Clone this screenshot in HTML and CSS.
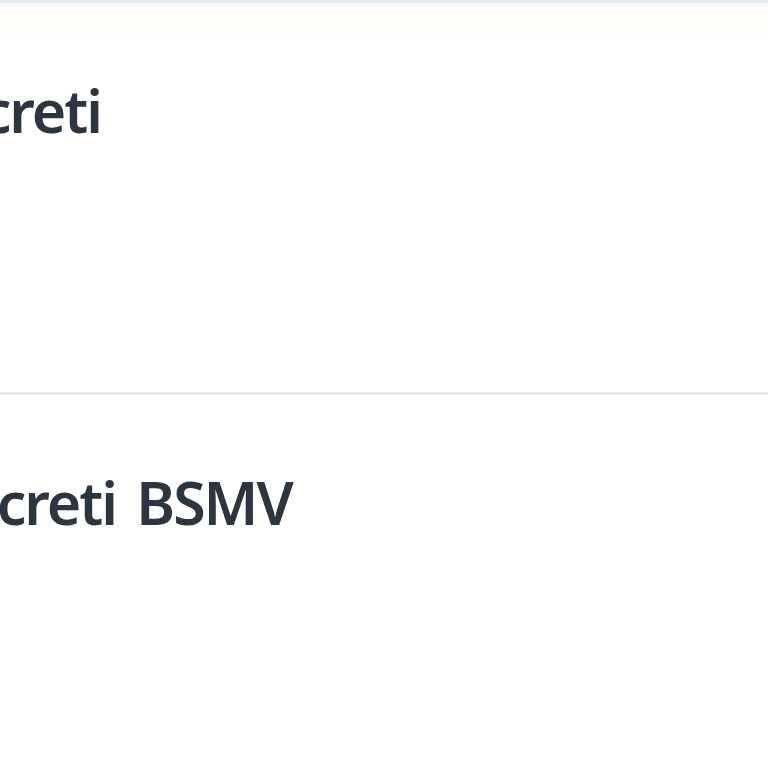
FILE: index.html
```html
<!DOCTYPE html>
<html lang="it">
<head>
<meta charset="utf-8">
<link rel="stylesheet" href="styles.css">
</head>
<body>
<div class="list">
  <div class="row row-first"><h2 class="title t1">Decreti</h2></div>
  <div class="row row-second"><h2 class="title t2">Decreti BSMV</h2></div>
</div>
</body>
</html>
```
FILE: styles.css
```css
html, body {
  margin: 0;
  padding: 0;
  background: #ffffff;
  overflow: hidden;
}
.list {
  width: 768px;
  height: 768px;
  border-top: 3px solid #e3eaf0;
  background: linear-gradient(#f4f8fb 0, #f8fafa 4px, #fffdf7 7px, #fffdf8 26px, #ffffff 34px, #ffffff 100%);
  background-repeat: no-repeat;
  background-size: 100% 40px;
  overflow: hidden;
}
.row {
  height: 389px;
  display: flex;
  align-items: flex-start;
}
.row-second {
  border-top: 3px solid #e3eaf0;
}
.title {
  margin: 0;
  font-family: "Noto Sans", "Open Sans", sans-serif;
  font-weight: 600;
  font-size: 59px;
  letter-spacing: -2px;
  word-spacing: 7px;
  line-height: 1;
  color: #2c3540;
  white-space: nowrap;
  padding-top: 78px;
}
.t1 { margin-left: -92px; }
.t2 { margin-left: -77px; }
```
